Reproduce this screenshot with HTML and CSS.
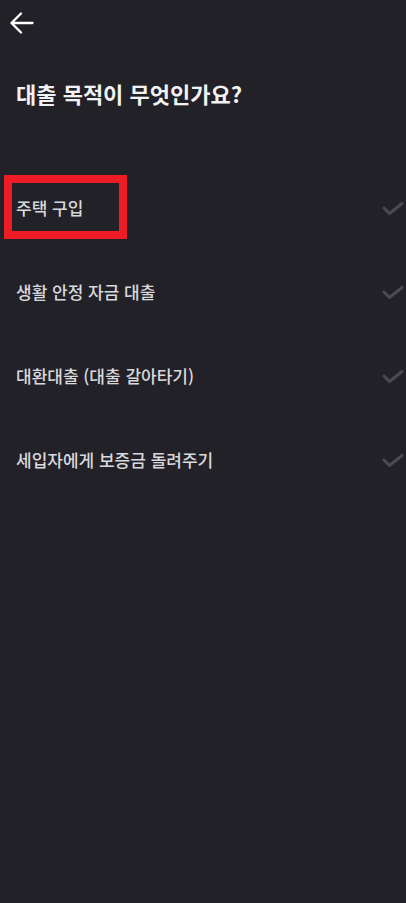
FILE: index.html
```html
<!DOCTYPE html>
<html lang="ko">
<head>
<meta charset="utf-8">
<title>대출 목적</title>
<link rel="stylesheet" href="styles.css">
</head>
<body>
<div class="screen">
  <header class="header">
    <svg class="back" width="24" height="24" viewBox="0 0 24 24" aria-hidden="true">
      <path d="M1.5 12H22.5M11 2.5L1.5 12L11 21.5" fill="none" stroke="#ffffff" stroke-width="2.3" stroke-linecap="round" stroke-linejoin="round"/>
    </svg>
  </header>
  <h1 class="title">대출 목적이 무엇인가요?</h1>
  <ul class="list">
    <li class="item">
      <span class="label">주택 구입</span>
      <svg class="check" width="22" height="14" viewBox="0 0 22 14" aria-hidden="true"><path d="M2 6L7.5 11.5L20 1.5" fill="none" stroke="#4a4950" stroke-width="3" stroke-linecap="round" stroke-linejoin="round"/></svg>
      <span class="highlight"></span>
    </li>
    <li class="item">
      <span class="label">생활 안정 자금 대출</span>
      <svg class="check" width="22" height="14" viewBox="0 0 22 14" aria-hidden="true"><path d="M2 6L7.5 11.5L20 1.5" fill="none" stroke="#4a4950" stroke-width="3" stroke-linecap="round" stroke-linejoin="round"/></svg>
    </li>
    <li class="item">
      <span class="label">대환대출 (대출 갈아타기)</span>
      <svg class="check" width="22" height="14" viewBox="0 0 22 14" aria-hidden="true"><path d="M2 6L7.5 11.5L20 1.5" fill="none" stroke="#4a4950" stroke-width="3" stroke-linecap="round" stroke-linejoin="round"/></svg>
    </li>
    <li class="item">
      <span class="label">세입자에게 보증금 돌려주기</span>
      <svg class="check" width="22" height="14" viewBox="0 0 22 14" aria-hidden="true"><path d="M2 6L7.5 11.5L20 1.5" fill="none" stroke="#4a4950" stroke-width="3" stroke-linecap="round" stroke-linejoin="round"/></svg>
    </li>
  </ul>
</div>
</body>
</html>
```
FILE: styles.css
```css
* { box-sizing: border-box; }
html, body {
  margin: 0;
  padding: 0;
  background: #222127;
}
body {
  font-family: "Noto Sans CJK KR", "Noto Sans", sans-serif;
  color: #dcdce0;
}
.screen {
  width: 406px;
  min-height: 903px;
  background: #222127;
}
.header {
  height: 48px;
  padding: 11px 0 0 10px;
}
.back { display: block; }
.title {
  margin: 30px 0 0;
  padding: 0 16px;
  font-size: 22px;
  line-height: 30px;
  font-weight: 700;
  color: #f2f2f4;
  letter-spacing: 0;
}
.list {
  list-style: none;
  margin: 58px 0 0;
  padding: 0;
}
.item {
  position: relative;
  height: 84px;
  display: flex;
  align-items: center;
  justify-content: space-between;
  padding: 0 2px 0 16px;
}
.label {
  font-size: 17px;
  line-height: 24px;
  font-weight: 500;
  color: #d9d9dd;
}
.check { display: block; margin-top: 2px; }
.highlight {
  position: absolute;
  left: 4px;
  top: 9px;
  width: 123px;
  height: 64px;
  border: 8px solid #ee1c25;
}
```
